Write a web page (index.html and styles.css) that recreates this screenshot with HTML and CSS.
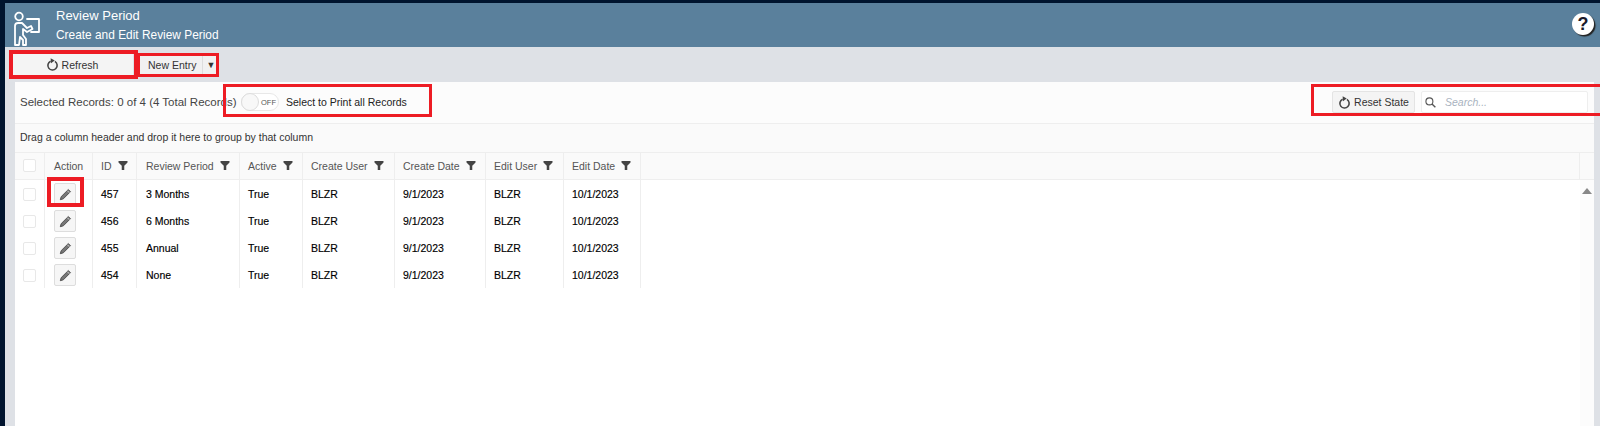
FILE: index.html
```html
<!DOCTYPE html>
<html lang="en">
<head>
<meta charset="utf-8">
<title>Review Period</title>
<link rel="stylesheet" href="styles.css">
</head>
<body>
<svg class="sprites" width="0" height="0">
  <defs>
    <symbol id="i-refresh" viewBox="0 0 14 14"><path d="M9.6 3.7A5 5 0 1 1 5 3.4" fill="none" stroke="#444" stroke-width="1.7"/><path d="M5 0.4 9.4 2.8 5.4 5.6z" fill="#444"/></symbol>
    <symbol id="i-filter" viewBox="0 0 10 10"><path d="M0 0h10v1.8L6.4 5.4V10H3.6V5.4L0 1.8z" fill="#444"/></symbol>
    <symbol id="i-pencil" viewBox="0 0 12 12"><path d="M8.6 1.4 10.6 3.4 4 10 1.2 10.8 2 8z" fill="#777" stroke="#444" stroke-width=".8" stroke-linejoin="round"/><path d="M7.6 2.4 9.6 4.4" stroke="#eee" stroke-width=".7"/></symbol>
  </defs>
</svg>
<div class="app">
  <header class="banner">
    <svg class="logo" viewBox="0 0 30 36" width="30" height="36" fill="none" stroke="#fff" stroke-width="1.8" stroke-linejoin="round" stroke-linecap="round">
      <circle cx="6" cy="5.5" r="3.8"/>
      <path d="M2 34V15q0-3 3-3h4l5 5 4-2 1.5 3L14 21l-4-3v6l3 4v6h-3v-5l-3-3-1 8z"/>
      <path d="M14 8H26V21H18"/>
    </svg>
    <div class="titles">
      <div class="title">Review Period</div>
      <div class="subtitle">Create and Edit Review Period</div>
    </div>
    <div class="help">?</div>
  </header>
  <nav class="toolbar">
    <button class="btn-refresh"><svg class="icon"><use href="#i-refresh"/></svg>Refresh</button>
    <div class="split">
      <span class="split-main">New Entry</span>
      <span class="split-arrow">▼</span>
    </div>
  </nav>
  <main class="panel">
    <section class="records">
      <span class="count">Selected Records: 0 of 4 (4 Total Records)</span>
      <div class="print">
        <span class="toggle"><span class="knob"></span><span class="off">OFF</span></span>
        <span class="print-label">Select to Print all Records</span>
      </div>
      <div class="tools">
        <button class="btn-reset"><svg class="icon"><use href="#i-refresh"/></svg>Reset State</button>
        <div class="search">
          <svg viewBox="0 0 12 12" width="11" height="11" fill="none" stroke="#555" stroke-width="1.2"><circle cx="4.8" cy="4.8" r="3.8"/><path d="M7.6 7.6 11.3 11.3" stroke-width="1.5"/></svg>
          <span class="placeholder">Search...</span>
        </div>
      </div>
    </section>
    <div class="group">Drag a column header and drop it here to group by that column</div>
    <div class="grid">
      <div class="row head">
        <div class="cell c-check"><span class="box"></span></div>
        <div class="cell c-action">Action</div>
        <div class="cell c-id">ID<svg class="filter"><use href="#i-filter"/></svg></div>
        <div class="cell c-period">Review Period<svg class="filter"><use href="#i-filter"/></svg></div>
        <div class="cell c-active">Active<svg class="filter"><use href="#i-filter"/></svg></div>
        <div class="cell c-cuser">Create User<svg class="filter"><use href="#i-filter"/></svg></div>
        <div class="cell c-cdate">Create Date<svg class="filter"><use href="#i-filter"/></svg></div>
        <div class="cell c-euser">Edit User<svg class="filter"><use href="#i-filter"/></svg></div>
        <div class="cell c-edate">Edit Date<svg class="filter"><use href="#i-filter"/></svg></div>
        <div class="cell c-fill"></div>
        <div class="cell c-scroll"></div>
      </div>
      <div class="body">
        <div class="rows">
          <div class="row">
            <div class="cell c-check"><span class="box"></span></div>
            <div class="cell c-action"><span class="edit"><svg class="pencil"><use href="#i-pencil"/></svg></span></div>
            <div class="cell c-id">457</div><div class="cell c-period">3 Months</div><div class="cell c-active">True</div><div class="cell c-cuser">BLZR</div><div class="cell c-cdate">9/1/2023</div><div class="cell c-euser">BLZR</div><div class="cell c-edate">10/1/2023</div>
          </div>
          <div class="row">
            <div class="cell c-check"><span class="box"></span></div>
            <div class="cell c-action"><span class="edit"><svg class="pencil"><use href="#i-pencil"/></svg></span></div>
            <div class="cell c-id">456</div><div class="cell c-period">6 Months</div><div class="cell c-active">True</div><div class="cell c-cuser">BLZR</div><div class="cell c-cdate">9/1/2023</div><div class="cell c-euser">BLZR</div><div class="cell c-edate">10/1/2023</div>
          </div>
          <div class="row">
            <div class="cell c-check"><span class="box"></span></div>
            <div class="cell c-action"><span class="edit"><svg class="pencil"><use href="#i-pencil"/></svg></span></div>
            <div class="cell c-id">455</div><div class="cell c-period">Annual</div><div class="cell c-active">True</div><div class="cell c-cuser">BLZR</div><div class="cell c-cdate">9/1/2023</div><div class="cell c-euser">BLZR</div><div class="cell c-edate">10/1/2023</div>
          </div>
          <div class="row">
            <div class="cell c-check"><span class="box"></span></div>
            <div class="cell c-action"><span class="edit"><svg class="pencil"><use href="#i-pencil"/></svg></span></div>
            <div class="cell c-id">454</div><div class="cell c-period">None</div><div class="cell c-active">True</div><div class="cell c-cuser">BLZR</div><div class="cell c-cdate">9/1/2023</div><div class="cell c-euser">BLZR</div><div class="cell c-edate">10/1/2023</div>
          </div>
        </div>
        <div class="scrollbar"><span class="up"></span></div>
      </div>
    </div>
  </main>
</div>
<span class="mark m-refresh"></span>
<span class="mark m-entry"></span>
<span class="mark m-print"></span>
<span class="mark m-tools"></span>
<span class="mark m-edit"></span>
</body>
</html>
```
FILE: styles.css
```css
* { box-sizing: border-box; }
html, body { margin: 0; height: 426px; overflow: hidden; }
body { background: #00142e; font-family: "Liberation Sans", Arial, sans-serif; position: relative; }
button { font-family: inherit; cursor: pointer; }
.sprites { position: absolute; }
.app { margin: 3px 0 0 5px; height: 423px; display: flex; flex-direction: column; background: #dee1e6; }
.banner { height: 44px; background: #5a809c; display: flex; align-items: flex-start; color: #fff; flex: none; }
.logo { margin: 8px 0 0 8px; flex: none; }
.titles { margin: 4px 0 0 13px; }
.title { height: 19px; line-height: 18px; font-size: 13px; }
.subtitle { line-height: 18px; font-size: 11.9px; }
.help { margin: 10px 6px 0 auto; width: 22px; height: 22px; border-radius: 50%; background: #fff; color: #1a1a2a; font: bold 18px/22px "Liberation Sans", sans-serif; text-align: center; box-shadow: 1.5px 1.5px 1px #222; }
.toolbar { height: 35px; flex: none; display: flex; align-items: center; padding-left: 8px; background: #dee1e6; }
.btn-refresh { width: 120px; height: 22px; margin-right: 5px; border: 0; background: #f4f4f4; font-size: 10.5px; color: #333; display: flex; align-items: center; justify-content: center; gap: 3px; padding: 0 2px 0 0; }
.icon { width: 13px; height: 13px; flex: none; }
.split { display: flex; height: 22px; background: #f1f1f1; font-size: 10.5px; color: #333; line-height: 22px; }
.split-main { padding: 0 6px 0 10px; border-right: 1px solid #ddd; }
.split-arrow { width: 15px; text-align: center; font-size: 9px; }
.panel { flex: 1; margin: 0 6px 0 10px; background: #fff; display: flex; flex-direction: column; min-height: 0; }
.records { height: 42px; flex: none; display: flex; align-items: center; padding: 0 0 1px 5px; background: #fcfcfc; border-bottom: 1px solid #eee; font-size: 11.5px; color: #444; }
.count { width: 221px; flex: none; white-space: nowrap; }
.print { display: flex; align-items: center; gap: 7px; font-size: 10.5px; color: #222; }
.toggle { width: 38px; height: 18px; border: 1px solid #e8e8e8; border-radius: 9px; background: #fff; display: flex; align-items: center; }
.knob { width: 18px; height: 18px; margin-left: -1px; border-radius: 50%; background: #f8f8f8; border: 1px solid #ddd; flex: none; }
.off { font-size: 7.5px; color: #555; margin-left: 2px; }
.tools { margin-left: auto; display: flex; align-items: center; gap: 6px; padding-right: 6px; }
.btn-reset { width: 83px; height: 22px; background: #f4f4f4; border: 1px solid #e4e4e4; border-radius: 2px; font-size: 10.5px; color: #333; display: flex; align-items: center; justify-content: center; gap: 3px; padding: 0; }
.search { width: 167px; height: 22px; background: #fff; border: 1px solid #eee; border-radius: 2px; display: flex; align-items: center; padding-left: 3px; gap: 9px; }
.placeholder { font-size: 10.5px; font-style: italic; color: #a9b3c0; }
.group { height: 29px; flex: none; background: #fafafa; border-bottom: 1px solid #eee; padding-left: 5px; font-size: 10.5px; line-height: 27px; color: #333; }
.grid { flex: 1; display: flex; flex-direction: column; min-height: 0; }
.row { display: flex; height: 27px; }
.head { background: #fafafa; border-bottom: 1px solid #eee; flex: none; }
.cell { border-right: 1px solid #eee; display: flex; align-items: center; padding: 1px 0 0 8px; font-size: 10.5px; color: #000; flex: none; -webkit-text-stroke: 0.15px #000; }
.head .cell { color: #555; -webkit-text-stroke: 0; padding-top: 0; padding-bottom: 1px; }
.c-check { width: 30px; }
.c-action { width: 48px; padding-left: 9px; }
.head .c-action { padding-left: 9px; }
.c-id { width: 44px; }
.c-period { width: 103px; padding-left: 9px; }
.c-active { width: 63px; }
.c-cuser { width: 92px; }
.c-cdate { width: 91px; }
.c-euser { width: 78px; }
.c-edate { width: 77px; }
.c-fill { flex: 1; }
.c-scroll { width: 14px; border: 0; }
.box { width: 13px; height: 13px; border: 1px solid #e8e8e8; border-radius: 2px; background: #fff; display: block; }
.edit { width: 22px; height: 22px; border: 1px solid #ddd; border-radius: 2px; background: #f6f6f6; display: flex; align-items: center; justify-content: center; }
.pencil { width: 13px; height: 13px; }
.filter { width: 10px; height: 9px; margin-left: 6px; flex: none; }
.body { flex: 1; display: flex; min-height: 0; justify-content: space-between; }
.scrollbar { width: 14px; padding-top: 8px; display: flex; justify-content: center; align-items: flex-start; background: #fcfcfc; }
.up { width: 0; height: 0; border: 5px solid transparent; border-top: 0; border-bottom: 6px solid #888; }
.mark { position: absolute; border: 4px solid #ed1c24; pointer-events: none; }
.m-refresh { left: 9px; top: 50px; width: 129px; height: 29px; }
.m-entry { left: 137px; top: 53px; width: 82px; height: 24px; border-width: 3px; }
.m-print { left: 223px; top: 84px; width: 209px; height: 33px; border-width: 3px; }
.m-tools { left: 1311px; top: 84px; width: 289px; height: 32px; border-width: 3px; border-right: 0; }
.m-edit { left: 47px; top: 177px; width: 37px; height: 30px; }
```
